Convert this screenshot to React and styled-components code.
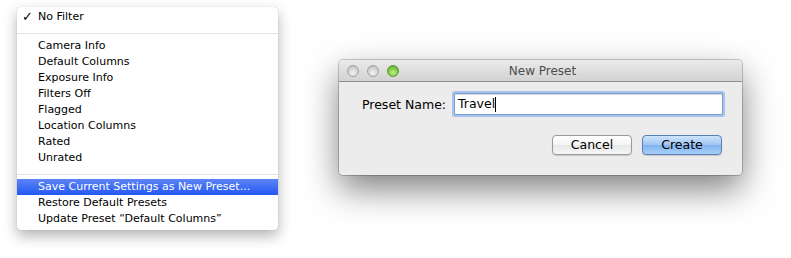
import React from "react";
import styled, { createGlobalStyle } from "styled-components";

const GlobalStyle = createGlobalStyle`
  html, body {
    margin: 0;
    padding: 0;
    background: #fff;
    font-family: "DejaVu Sans", "Liberation Sans", sans-serif;
  }
`;

const filters = [
  "Camera Info",
  "Default Columns",
  "Exposure Info",
  "Filters Off",
  "Flagged",
  "Location Columns",
  "Rated",
  "Unrated",
];

function App() {
  return (
    <Page>
      <GlobalStyle />
      <Menu>
        <MenuItem>
          <Check>✓</Check>No Filter
        </MenuItem>
        <Separator />
        {filters.map((f) => (
          <MenuItem key={f}>{f}</MenuItem>
        ))}
        <Separator />
        <MenuItem active>Save Current Settings as New Preset...</MenuItem>
        <MenuItem>Restore Default Presets</MenuItem>
        <MenuItem>Update Preset “Default Columns”</MenuItem>
      </Menu>

      <Dialog>
        <TitleBar>
          <Lights>
            <Light />
            <Light />
            <Light green />
          </Lights>
          <Title>New Preset</Title>
        </TitleBar>
        <Body>
          <FieldRow>
            <Label>Preset Name:</Label>
            <Input>
              Travel<Caret />
            </Input>
          </FieldRow>
          <Buttons>
            <Button>Cancel</Button>
            <Button primary>Create</Button>
          </Buttons>
        </Body>
      </Dialog>
    </Page>
  );
}

export default App;

const Page = styled.div`
  display: flex;
  align-items: flex-start;
  padding: 7px 0 0 17px;
  gap: 61px;
  height: 251px;
`;

const Menu = styled.div`
  width: 261px;
  box-sizing: border-box;
  padding: 2px 0 3px;
  background: #fff;
  border-radius: 4px;
  box-shadow: 0 6px 14px rgba(0, 0, 0, 0.3), 0 0 1px rgba(0, 0, 0, 0.25);
`;

const MenuItem = styled.div`
  position: relative;
  height: 16px;
  line-height: 16px;
  padding-left: 21px;
  font-size: 11px;
  color: ${(p) => (p.active ? "#fff" : "#000")};
  background: ${(p) =>
    p.active ? "linear-gradient(#5d84f6, #2358f3)" : "transparent"};
  white-space: nowrap;
`;

const Check = styled.span`
  position: absolute;
  left: 5px;
  font-size: 13px;
  font-weight: bold;
`;

const Separator = styled.div`
  height: 13px;
  position: relative;

  &::after {
    content: "";
    position: absolute;
    left: 0;
    right: 0;
    top: 8px;
    height: 1px;
    background: #e3e3e3;
  }
`;

const Dialog = styled.div`
  margin-top: 53px;
  width: 403px;
  background: #ececec;
  border-radius: 4px;
  overflow: hidden;
  box-shadow: 0 14px 34px rgba(0, 0, 0, 0.5), 0 0 0 1px rgba(0, 0, 0, 0.2);
`;

const TitleBar = styled.div`
  position: relative;
  height: 22px;
  box-sizing: border-box;
  display: flex;
  align-items: center;
  justify-content: center;
  background: linear-gradient(#ebebeb, #d2d2d2);
  border-bottom: 1px solid #8f8f8f;
`;

const Lights = styled.div`
  position: absolute;
  left: 8px;
  top: 5px;
  display: flex;
  gap: 8px;
`;

const Light = styled.div`
  width: 12px;
  height: 12px;
  box-sizing: border-box;
  border-radius: 50%;
  border: 1px solid ${(p) => (p.green ? "#5a9a3a" : "#a3a3a3")};
  background: ${(p) =>
    p.green
      ? "radial-gradient(circle at 50% 65%, #c7f08f 0%, #7ac943 55%, #4f9a2d 100%)"
      : "radial-gradient(circle at 50% 70%, #f4f4f4 0%, #d4d4d4 55%, #b3b3b3 100%)"};
`;

const Title = styled.div`
  font-size: 12px;
  color: #4d4d4d;
  margin-left: 4px;
`;

const Body = styled.div`
  padding: 11px 19px 20px 23px;
`;

const FieldRow = styled.div`
  display: flex;
  align-items: center;
  justify-content: space-between;
`;

const Label = styled.div`
  font-size: 12.5px;
  color: #000;
`;

const Input = styled.div`
  width: 269px;
  height: 22px;
  box-sizing: border-box;
  background: #fff;
  border: 1px solid #7a9fcf;
  box-shadow: 0 0 0 2px #a7c5ec, inset 0 1px 1px rgba(0, 0, 0, 0.15);
  border-radius: 1px;
  font-size: 12.5px;
  line-height: 20px;
  padding-left: 3px;
  display: flex;
  align-items: center;
`;

const Caret = styled.span`
  display: inline-block;
  width: 1px;
  height: 15px;
  background: #000;
`;

const Buttons = styled.div`
  display: flex;
  justify-content: flex-end;
  gap: 10px;
  margin-top: 20px;
  padding-right: 1px;
`;

const Button = styled.div`
  width: 80px;
  height: 20px;
  box-sizing: border-box;
  border-radius: 4px;
  font-size: 12.5px;
  line-height: 18px;
  text-align: center;
  color: #000;
  border: 1px solid ${(p) => (p.primary ? "#5a7fb8" : "#9a9a9a")};
  background: ${(p) =>
    p.primary
      ? "linear-gradient(#cfe3fb 0%, #9fc6f4 50%, #7fb2f0 51%, #a9d0f8 100%)"
      : "linear-gradient(#ffffff 0%, #f4f4f4 50%, #e8e8e8 51%, #f6f6f6 100%)"};
  box-shadow: 0 1px 1px rgba(0, 0, 0, 0.15);
`;
